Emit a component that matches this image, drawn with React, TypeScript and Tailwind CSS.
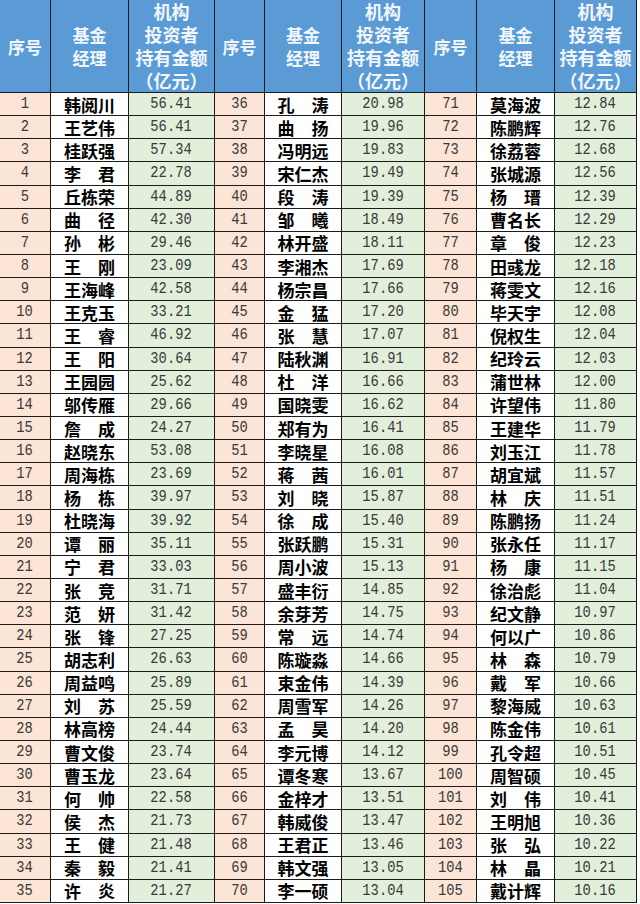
import React from "react";

const raw = `1 韩阅川 56.41
2 王艺伟 56.41
3 桂跃强 57.34
4 李君 22.78
5 丘栋荣 44.89
6 曲径 42.30
7 孙彬 29.46
8 王刚 23.09
9 王海峰 42.58
10 王克玉 33.21
11 王睿 46.92
12 王阳 30.64
13 王园园 25.62
14 邬传雁 29.66
15 詹成 24.27
16 赵晓东 53.08
17 周海栋 23.69
18 杨栋 39.97
19 杜晓海 39.92
20 谭丽 35.11
21 宁君 33.03
22 张竞 31.71
23 范妍 31.42
24 张锋 27.25
25 胡志利 26.63
26 周益鸣 25.89
27 刘苏 25.59
28 林高榜 24.44
29 曹文俊 23.74
30 曹玉龙 23.64
31 何帅 22.58
32 侯杰 21.73
33 王健 21.48
34 秦毅 21.41
35 许炎 21.27
36 孔涛 20.98
37 曲扬 19.96
38 冯明远 19.83
39 宋仁杰 19.49
40 段涛 19.39
41 邹曦 18.49
42 林开盛 18.11
43 李湘杰 17.69
44 杨宗昌 17.66
45 金猛 17.20
46 张慧 17.07
47 陆秋渊 16.91
48 杜洋 16.66
49 国晓雯 16.62
50 郑有为 16.41
51 李晓星 16.08
52 蒋茜 16.01
53 刘晓 15.87
54 徐成 15.40
55 张跃鹏 15.31
56 周小波 15.13
57 盛丰衍 14.85
58 余芽芳 14.75
59 常远 14.74
60 陈璇淼 14.66
61 束金伟 14.39
62 周雪军 14.26
63 孟昊 14.20
64 李元博 14.12
65 谭冬寒 13.67
66 金梓才 13.51
67 韩威俊 13.47
68 王君正 13.46
69 韩文强 13.05
70 李一硕 13.04
71 莫海波 12.84
72 陈鹏辉 12.76
73 徐荔蓉 12.68
74 张城源 12.56
75 杨瑨 12.39
76 曹名长 12.29
77 章俊 12.23
78 田彧龙 12.18
79 蒋雯文 12.16
80 毕天宇 12.08
81 倪权生 12.04
82 纪玲云 12.03
83 蒲世林 12.00
84 许望伟 11.80
85 王建华 11.79
86 刘玉江 11.78
87 胡宜斌 11.57
88 林庆 11.51
89 陈鹏扬 11.24
90 张永任 11.17
91 杨康 11.15
92 徐治彪 11.04
93 纪文静 10.97
94 何以广 10.86
95 林森 10.79
96 戴军 10.66
97 黎海威 10.63
98 陈金伟 10.61
99 孔令超 10.51
100 周智硕 10.45
101 刘伟 10.41
102 王明旭 10.36
103 张弘 10.22
104 林晶 10.21
105 戴计辉 10.16`;

type Row = { n: string; name: string; amt: string };

const data: Row[] = raw.split("\n").map((l) => {
  const [n, name, amt] = l.trim().split(" ");
  return { n, name: name.length === 2 ? name[0] + "\u3000" + name[1] : name, amt };
});

function HeaderGroup() {
  return (
    <>
      <div className="bg-[#5b9bd5] flex items-center justify-center text-[#f2f6fb] font-['Noto_Sans_CJK_SC',sans-serif] font-bold text-[17px] leading-[23px]">
        序号
      </div>
      <div className="bg-[#5b9bd5] flex flex-col items-center justify-center text-[#f2f6fb] font-['Noto_Sans_CJK_SC',sans-serif] font-bold text-[17px] leading-[23px]">
        <span>基金</span>
        <span>经理</span>
      </div>
      <div className="bg-[#5b9bd5] flex flex-col items-center justify-center text-[#f2f6fb] font-['Noto_Sans_CJK_SC',sans-serif] font-bold text-[18px] leading-[23px]">
        <span>机构</span>
        <span>投资者</span>
        <span>持有金额</span>
        <span>（亿元）</span>
      </div>
    </>
  );
}

function Cells({ r }: { r: Row }) {
  return (
    <>
      <div className="bg-[#fce4d6] flex items-center justify-center text-[#3a3a3a]">
        <span className="inline-block font-['Liberation_Mono',monospace] text-[16px] leading-none scale-x-[0.86]">{r.n}</span>
      </div>
      <div className="bg-white flex items-center justify-center text-black font-['Noto_Sans_CJK_SC',sans-serif] font-bold text-[17px] leading-none">
        {r.name}
      </div>
      <div className="bg-[#e2efda] flex items-center justify-center text-[#3a3a3a]">
        <span className="inline-block font-['Liberation_Mono',monospace] text-[16px] leading-none scale-x-[0.86]">{r.amt}</span>
      </div>
    </>
  );
}

export default function App() {
  const rows = Array.from({ length: 35 }, (_, i) => i);
  return (
    <div className="w-[640px] h-[904px] bg-white overflow-hidden">
      <div className="w-fit grid grid-cols-[50px_77px_85px_49px_76px_82px_51px_77px_81px] grid-rows-[92px_repeat(35,22.15px)] gap-px bg-[#1c1c1c] border-r border-b border-[#1c1c1c]">
        <HeaderGroup />
        <HeaderGroup />
        <HeaderGroup />
        {rows.map((i) => (
          <React.Fragment key={i}>
            <Cells r={data[i]} />
            <Cells r={data[i + 35]} />
            <Cells r={data[i + 70]} />
          </React.Fragment>
        ))}
      </div>
    </div>
  );
}
